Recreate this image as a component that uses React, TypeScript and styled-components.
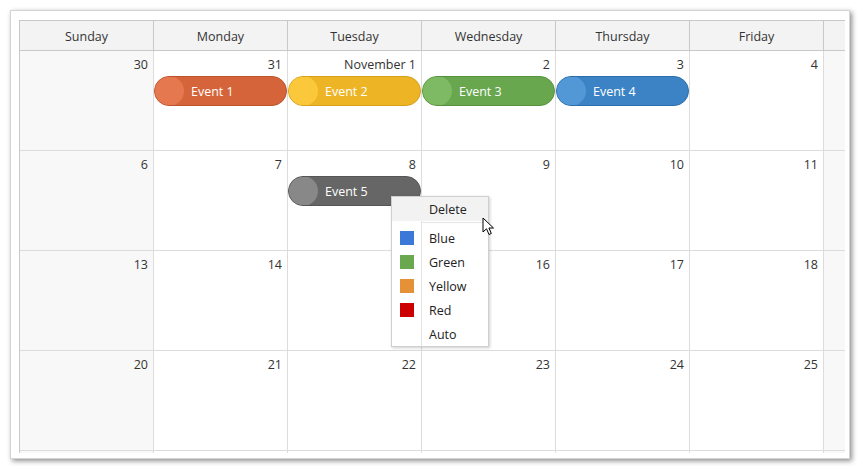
import React from "react";
import styled, { createGlobalStyle } from "styled-components";

const GlobalStyle = createGlobalStyle`
  html, body { margin: 0; padding: 0; background: #ffffff; }
  body { font-family: "Open Sans", "Noto Sans", sans-serif; }
  * { box-sizing: border-box; }
`;

const Frame = styled.div`
  margin: 10px;
  width: 840px;
  height: 449px;
  background: #ffffff;
  border: 1px solid #d4d4d4;
  box-shadow: 2px 2px 5px rgba(0, 0, 0, 0.45);
  padding: 9px 0 0 8px;
  overflow: hidden;
`;

const Calendar = styled.div`
  position: relative;
  width: 826px;
  height: 433px;
  overflow: hidden;
`;

const Grid = styled.div`
  width: 939px;
  border-left: 1px solid #c8c8c8;
`;

const HeaderRow = styled.div`
  display: grid;
  grid-template-columns: repeat(7, 134px);
  border-top: 1px solid #c8c8c8;
  border-bottom: 1px solid #c8c8c8;
  background: #f3f3f3;
`;

const HeaderCell = styled.div`
  height: 29px;
  padding-top: 1px;
  line-height: 29px;
  text-align: center;
  font-size: 12.5px;
  color: #333333;
  border-right: 1px solid #c8c8c8;
`;

const WeekRow = styled.div`
  display: grid;
  grid-template-columns: repeat(7, 134px);
`;

const DayCell = styled.div<{ $off?: boolean }>`
  height: 100px;
  border-right: 1px solid #dcdcdc;
  border-bottom: 1px solid #dcdcdc;
  background: ${(p) => (p.$off ? "#f8f8f8" : "#ffffff")};
  display: flex;
  flex-direction: column;
`;

const DayNumber = styled.div`
  height: 25px;
  line-height: 27px;
  text-align: right;
  padding-right: 5px;
  font-size: 12.5px;
  color: #333333;
`;

const EventBar = styled.div<{ $bar: string; $dot: string; $edge: string }>`
  position: relative;
  height: 30px;
  border-radius: 15px;
  background: ${(p) => p.$bar};
  border: 1px solid ${(p) => p.$edge};
  color: #ffffff;
  font-size: 12.5px;
  line-height: 30px;
  padding-left: 36px;
  overflow: hidden;
  &::before {
    content: "";
    position: absolute;
    left: -1px;
    top: -1px;
    width: 30px;
    height: 30px;
    border-radius: 50%;
    background: ${(p) => p.$dot};
  }
`;

const EventText = styled.span`
  position: relative;
`;

const Menu = styled.div`
  position: absolute;
  left: 372px;
  top: 176px;
  width: 98px;
  background: #ffffff;
  border: 1px solid #cfcfcf;
  box-shadow: 1px 1px 3px rgba(0, 0, 0, 0.2);
  display: flex;
  flex-direction: column;
  font-size: 12.5px;
  color: #222222;
`;

const MenuItem = styled.div<{ $hover?: boolean }>`
  display: flex;
  align-items: center;
  height: 24px;
  background: ${(p) => (p.$hover ? "#f2f2f2" : "transparent")};
`;

const IconCol = styled.div<{ $line?: boolean }>`
  width: 30px;
  height: 100%;
  flex: none;
  display: flex;
  align-items: center;
  padding-left: 8px;
  border-right: 1px solid ${(p) => (p.$line ? "#e4e4e4" : "transparent")};
`;

const Swatch = styled.span<{ $c: string }>`
  width: 14px;
  height: 14px;
  background: ${(p) => p.$c};
`;

const Label = styled.span`
  padding-left: 7px;
`;

const Separator = styled.div`
  display: flex;
  height: 5px;
`;

const SepIcon = styled.div`
  width: 30px;
  height: 100%;
  border-right: 1px solid #e4e4e4;
`;

const SepLine = styled.div`
  flex: 1;
  height: 1px;
  margin-top: 1px;
  background: #e4e4e4;
`;

const Cursor = styled.svg`
  position: absolute;
  left: 463px;
  top: 197px;
`;

type Ev = { name: string; bar: string; dot: string; edge: string };

const E1: Ev = { name: "Event 1", bar: "#d5643b", dot: "#e5784f", edge: "#bb532d" };
const E2: Ev = { name: "Event 2", bar: "#edb526", dot: "#fcc83b", edge: "#d6a01a" };
const E3: Ev = { name: "Event 3", bar: "#69a74f", dot: "#7dba63", edge: "#57933e" };
const E4: Ev = { name: "Event 4", bar: "#3c83c5", dot: "#5297d6", edge: "#2c6eab" };
const E5: Ev = { name: "Event 5", bar: "#666666", dot: "#888888", edge: "#555555" };

const days = ["Sunday", "Monday", "Tuesday", "Wednesday", "Thursday", "Friday", ""];

const weeks: { label: string; ev?: Ev }[][] = [
  [
    { label: "30" },
    { label: "31", ev: E1 },
    { label: "November 1", ev: E2 },
    { label: "2", ev: E3 },
    { label: "3", ev: E4 },
    { label: "4" },
    { label: "" },
  ],
  [
    { label: "6" },
    { label: "7" },
    { label: "8", ev: E5 },
    { label: "9" },
    { label: "10" },
    { label: "11" },
    { label: "" },
  ],
  [
    { label: "13" },
    { label: "14" },
    { label: "15" },
    { label: "16" },
    { label: "17" },
    { label: "18" },
    { label: "" },
  ],
  [
    { label: "20" },
    { label: "21" },
    { label: "22" },
    { label: "23" },
    { label: "24" },
    { label: "25" },
    { label: "" },
  ],
  [
    { label: "" },
    { label: "" },
    { label: "" },
    { label: "" },
    { label: "" },
    { label: "" },
    { label: "" },
  ],
];

const colors = [
  { name: "Blue", c: "#3c78d8" },
  { name: "Green", c: "#6aa84f" },
  { name: "Yellow", c: "#e69138" },
  { name: "Red", c: "#cc0000" },
];

export default function App() {
  return (
    <>
      <GlobalStyle />
      <Frame>
        <Calendar>
          <Grid>
            <HeaderRow>
              {days.map((d, i) => (
                <HeaderCell key={i}>{d}</HeaderCell>
              ))}
            </HeaderRow>
            {weeks.map((w, wi) => (
              <WeekRow key={wi}>
                {w.map((c, ci) => (
                  <DayCell key={ci} $off={ci === 0 || ci === 6}>
                    <DayNumber>{c.label}</DayNumber>
                    {c.ev && (
                      <EventBar $bar={c.ev.bar} $dot={c.ev.dot} $edge={c.ev.edge}>
                        <EventText>{c.ev.name}</EventText>
                      </EventBar>
                    )}
                  </DayCell>
                ))}
              </WeekRow>
            ))}
          </Grid>
          <Menu>
            <MenuItem $hover>
              <IconCol />
              <Label>Delete</Label>
            </MenuItem>
            <Separator>
              <SepIcon />
              <SepLine />
            </Separator>
            {colors.map((c) => (
              <MenuItem key={c.name}>
                <IconCol $line>
                  <Swatch $c={c.c} />
                </IconCol>
                <Label>{c.name}</Label>
              </MenuItem>
            ))}
            <MenuItem>
              <IconCol $line />
              <Label>Auto</Label>
            </MenuItem>
          </Menu>
          <Cursor width="14" height="20" viewBox="0 0 14 20">
            <path
              d="M1 1 L1 15 L4.5 11.8 L7 17.5 L9.3 16.5 L6.9 11 L11.5 11 Z"
              fill="#ffffff"
              stroke="#000000"
              strokeWidth="1"
              strokeLinejoin="miter"
            />
          </Cursor>
        </Calendar>
      </Frame>
    </>
  );
}
